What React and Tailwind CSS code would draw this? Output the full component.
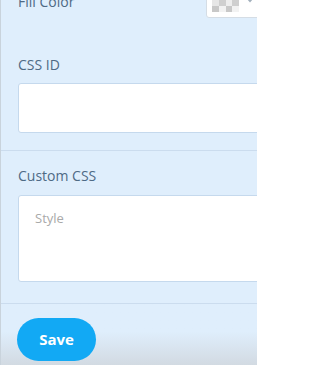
export default function App() {
  const font = { fontFamily: '"Open Sans", "Liberation Sans", sans-serif' };
  return (
    <div
      className="relative w-[257px] h-[365px] overflow-hidden bg-[#dfeefc] border-l border-[#c9d3dc] flex flex-col"
      style={font}
    >
      {/* Fill Color row */}
      <div className="flex items-end justify-between pl-[17px] -mt-[13px] h-[31px] shrink-0">
        <span className="text-[14px] leading-[20px] text-[#4e6a85] mb-[6px]">Fill Color</span>
        <div className="w-[60px] h-[31px] bg-white border border-[#d5dde5] rounded-[3px] flex items-end pl-[5px] pb-[5px] gap-[8px] shrink-0 -mr-[9px]">
          <div className="grid grid-cols-4 w-[27px] h-[12px]">
            <div className="bg-[#e6e6e6]" />
            <div className="bg-[#cfcfcf]" />
            <div className="bg-[#ededed]" />
            <div className="bg-[#cfcfcf]" />
            <div className="bg-[#c8c8c8]" />
            <div className="bg-[#f2f2f2]" />
            <div className="bg-[#c8c8c8]" />
            <div className="bg-[#f2f2f2]" />
          </div>
          <svg width="6" height="4" viewBox="0 0 6 4" className="mb-[9px]">
            <path d="M0 0 L6 0 L3 3.5 Z" fill="#a3b0bc" />
          </svg>
        </div>
      </div>

      {/* CSS ID section */}
      <div className="pl-[17px] pt-[37px] pb-[17px] border-b border-[#cbdcee] shrink-0">
        <div className="text-[14px] leading-[20px] text-[#4e6a85]">CSS ID</div>
        <div className="mt-[8px] h-[50px] -mr-[4px] bg-white border border-[#c5d9ed] rounded-[3px]" />
      </div>

      {/* Custom CSS section */}
      <div className="pl-[17px] pt-[15px] pb-[21px] border-b border-[#cbdcee] shrink-0">
        <div className="text-[14px] leading-[20px] text-[#4e6a85]">Custom CSS</div>
        <div className="mt-[9px] h-[87px] -mr-[4px] bg-white border border-[#c5d9ed] rounded-[3px] pl-[16px] pt-[9px]">
          <span className="text-[13px] leading-[18px] text-[#a9a9a9]">Style</span>
        </div>
      </div>

      {/* Footer */}
      <div className="flex-1 pl-[16px] pt-[14px] bg-linear-to-b from-[#dfeefc] from-45% to-[#d2dae2]">
        <button className="w-[79px] h-[43px] rounded-full bg-[#12a9f4] text-white text-[15px] font-bold flex items-center justify-center">
          Save
        </button>
      </div>
    </div>
  );
}
